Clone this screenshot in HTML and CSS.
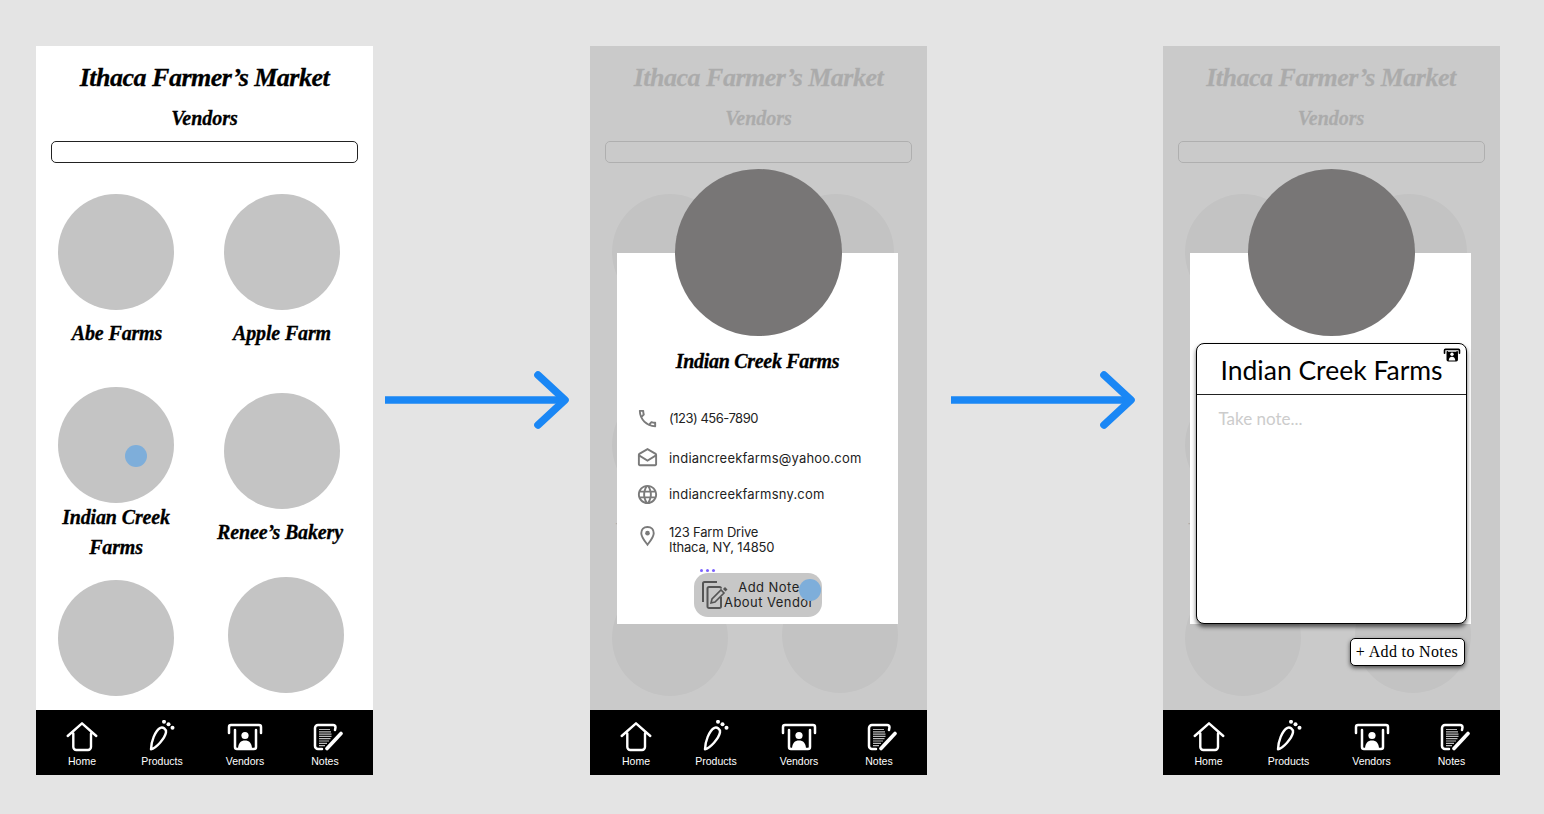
FILE: index.html
```html
<!DOCTYPE html>
<html lang="en">
<head>
    <meta charset="UTF-8">
    <meta name="viewport" content="width=device-width, initial-scale=1.0">
    <title>Ithaca Farmer's Market flow</title>
    <link rel="stylesheet" href="styles.css">
</head>
<body>

<!-- nav icons, used by all three phones -->
<svg class="defs" width="0" height="0">
    <symbol id="i-home" viewBox="-1 0 36 34">
        <path d="M2.7 16 17 3.3 31.3 16M8.3 13.5V27a3 3 0 0 0 3 3H23a3 3 0 0 0 3-3V13.5" fill="none" stroke="#fff" stroke-width="2.4" stroke-linecap="round" stroke-linejoin="round"/>
    </symbol>
    <symbol id="i-products" viewBox="-1 1.7 36 34">
        <path d="M6 31C6 24 10 12 15.5 9.5 18 8.5 21.5 11 21 14 20 20 11 30 6 31Z" fill="none" stroke="#fff" stroke-width="2.4" stroke-linejoin="round"/>
        <circle cx="19" cy="3.5" r="2" fill="#fff"/>
        <circle cx="23.5" cy="6" r="2" fill="#fff"/>
        <circle cx="27.5" cy="9.5" r="2" fill="#fff"/>
    </symbol>
    <symbol id="i-vendors" viewBox="0 -2 36 34">
        <path d="M2 11V5a2 2 0 0 1 2-2H32a2 2 0 0 1 2 2V11M8 8V25a2 2 0 0 0 2 2H27a2 2 0 0 0 2-2V8" fill="none" stroke="#fff" stroke-width="2.5" stroke-linecap="round"/>
        <circle cx="18" cy="13.5" r="3.6" fill="#fff"/>
        <path d="M11 27C11 21 14 18.5 18 18.5S25 21 25 27Z" fill="#fff"/>
    </symbol>
    <symbol id="i-notes" viewBox="-6 -3 36 34">
        <path d="M9 26H5a3 3 0 0 1-3-3V5a3 3 0 0 1 3-3H20a2.500 2.500 0 0 1 2.500 2.500L22 7" fill="none" stroke="#fff" stroke-width="2.5" stroke-linecap="round"/>
        <path d="M6 6.500H17M6 8.800H18M6 11.100H18.500M6 13.400H18.500M6 15.700H17.500M6 18H16M6 20.300H14M6 22.600H12" stroke="#bbb" stroke-width="1.200"/>
        <path d="M14 25.500 28 10.500" stroke="#fff" stroke-width="3.600" stroke-linecap="round"/>
    </symbol>
    <symbol id="i-vendors-dark" viewBox="0 0 36 30">
        <path d="M2 11V5a2 2 0 0 1 2-2H32a2 2 0 0 1 2 2V11M8 8V25a2 2 0 0 0 2 2H27a2 2 0 0 0 2-2V8" fill="none" stroke="#000" stroke-width="3.500" stroke-linecap="round"/>
        <rect x="8" y="8" width="21" height="19" fill="#000"/>
        <circle cx="18" cy="13.500" r="3.600" fill="#fff"/>
        <path d="M11 27C11 21 14 18.500 18 18.500S25 21 25 27Z" fill="#fff"/>
    </symbol>
</svg>

<main class="board">

    <!-- 1. vendor list -->
    <section class="phone">
        <div class="screen">
            <h1 class="title">Ithaca Farmer’s Market</h1>
            <h2 class="subtitle">Vendors</h2>
            <div class="search"></div>
            <div class="vendors">
                <div class="col">
                    <div class="vendor v-abe"><div class="thumb"></div><p class="vendor-name">Abe Farms</p></div>
                    <div class="vendor v-indian"><div class="thumb"><span class="tap tap-thumb"></span></div><p class="vendor-name">Indian Creek<br>Farms</p></div>
                    <div class="vendor v-low-left"><div class="thumb"></div></div>
                </div>
                <div class="col">
                    <div class="vendor"><div class="thumb"></div><p class="vendor-name">Apple Farm</p></div>
                    <div class="vendor v-renee"><div class="thumb"></div><p class="vendor-name">Renee’s Bakery</p></div>
                    <div class="vendor v-low-right"><div class="thumb"></div></div>
                </div>
            </div>
        </div>
        <nav class="tabbar">
            <a class="tab"><svg class="tab-icon"><use href="#i-home"/></svg>Home</a>
            <a class="tab"><svg class="tab-icon"><use href="#i-products"/></svg>Products</a>
            <a class="tab"><svg class="tab-icon"><use href="#i-vendors"/></svg>Vendors</a>
            <a class="tab"><svg class="tab-icon"><use href="#i-notes"/></svg>Notes</a>
        </nav>
    </section>

    <svg class="arrow arrow-first" viewBox="0 0 185 60"><path d="M0 30H178" fill="none" stroke="#1a87f5" stroke-width="7.600"/><path d="M153 5 180 30 153 55" fill="none" stroke="#1a87f5" stroke-width="7.600" stroke-linecap="round" stroke-linejoin="round"/></svg>

    <!-- 2. vendor card -->
    <section class="phone phone-second">
        <div class="screen">
            <h1 class="title">Ithaca Farmer’s Market</h1>
            <h2 class="subtitle">Vendors</h2>
            <div class="search"></div>
            <div class="vendors">
                <div class="col">
                    <div class="vendor v-abe"><div class="thumb"></div><p class="vendor-name">Abe Farms</p></div>
                    <div class="vendor v-indian"><div class="thumb"></div><p class="vendor-name">Indian Creek<br>Farms</p></div>
                    <div class="vendor v-low-left"><div class="thumb"></div></div>
                </div>
                <div class="col">
                    <div class="vendor"><div class="thumb"></div><p class="vendor-name">Apple Farm</p></div>
                    <div class="vendor v-renee"><div class="thumb"></div><p class="vendor-name">Renee’s Bakery</p></div>
                    <div class="vendor v-low-right"><div class="thumb"></div></div>
                </div>
            </div>
            <div class="dim"></div>
            <div class="card">
                <h3 class="card-name">Indian Creek Farms</h3>
                <div class="detail detail-phone">
                    <svg class="detail-icon" viewBox="0 0 24 24"><path d="M6.540 5c.060.890.210 1.760.450 2.590l-1.200 1.200c-.410-1.200-.670-2.470-.760-3.790h1.510m9.860 12.020c.850.240 1.720.390 2.600.450v1.490c-1.320-.090-2.590-.350-3.800-.750l1.200-1.190M7.500 3H4c-.550 0-1 .450-1 1 0 9.390 7.610 17 17 17 .550 0 1-.450 1-1v-3.490c0-.550-.450-1-1-1-1.240 0-2.450-.200-3.570-.570-.100-.040-.210-.050-.310-.050-.260 0-.510.100-.710.290l-2.200 2.200c-2.830-1.450-5.150-3.760-6.590-6.590l2.200-2.200c.280-.280.360-.670.250-1.020C8.700 6.450 8.500 5.250 8.500 4c0-.550-.450-1-1-1z"/></svg>
                    <span>(123) 456-7890</span>
                </div>
                <div class="detail detail-mail">
                    <svg class="detail-icon" viewBox="0 0 24 24"><path d="M21.990 8c0-.720-.370-1.350-.940-1.700L12 1 2.950 6.300C2.380 6.650 2 7.280 2 8v10c0 1.100.900 2 2 2h16c1.100 0 2-.900 2-2l-.010-10zM12 3.320 19.990 8v.010L12 13 4 8l8-4.680zM4 18v-7.660l8 5.020 7.990-4.990L20 18H4z"/></svg>
                    <span>indiancreekfarms@yahoo.com</span>
                </div>
                <div class="detail detail-web">
                    <svg class="detail-icon" viewBox="0 0 24 24"><path d="M11.990 2C6.470 2 2 6.480 2 12s4.470 10 9.990 10C17.520 22 22 17.520 22 12S17.520 2 11.990 2zm6.930 6h-2.950c-.320-1.250-.780-2.450-1.380-3.560 1.840.630 3.370 1.910 4.330 3.560zM12 4.040c.830 1.200 1.480 2.530 1.910 3.960h-3.820c.430-1.430 1.080-2.760 1.910-3.960zM4.260 14C4.100 13.360 4 12.690 4 12s.100-1.360.260-2h3.380c-.080.660-.140 1.320-.140 2s.060 1.340.140 2H4.260zm.820 2h2.950c.320 1.250.780 2.450 1.380 3.560-1.840-.630-3.370-1.900-4.330-3.560zm2.950-8H5.080c.960-1.660 2.490-2.930 4.330-3.560C8.810 5.550 8.350 6.750 8.030 8zM12 19.960c-.830-1.200-1.480-2.530-1.910-3.960h3.820c-.430 1.430-1.080 2.760-1.910 3.960zM14.340 14H9.660c-.090-.660-.160-1.320-.160-2s.070-1.350.160-2h4.680c.090.650.160 1.320.160 2s-.070 1.340-.160 2zm.250 5.560c.600-1.110 1.060-2.310 1.380-3.560h2.950c-.960 1.650-2.490 2.930-4.330 3.560zM16.360 14c.080-.660.140-1.320.140-2s-.060-1.340-.140-2h3.380c.160.640.260 1.310.260 2s-.100 1.360-.260 2h-3.380z"/></svg>
                    <span>indiancreekfarmsny.com</span>
                </div>
                <div class="detail detail-address">
                    <svg class="detail-icon" viewBox="0 0 24 24"><path d="M12 2C8 2 5.500 5 5.500 8.500c0 4 3.500 8 6.500 12 3-4 6.500-8 6.500-12C18.500 5 16 2 12 2z" fill="none" stroke="#7a7a7a" stroke-width="2"/><circle cx="12" cy="8.500" r="2.400"/></svg>
                    <span>123 Farm Drive<br>Ithaca, NY, 14850</span>
                </div>
                <button class="add-note">
                    <i class="busy"></i>
                    <svg class="add-note-icon" viewBox="0 0 30 30"><path d="M3 22V3.500A1.500 1.500 0 0 1 4.500 2H17" fill="none" stroke="#555" stroke-width="2"/><path d="M21 17V26.500A1.500 1.500 0 0 1 19.500 28H9A1.500 1.500 0 0 1 7.500 26.500V8.500A1.500 1.500 0 0 1 9 7H19.500A1.500 1.500 0 0 1 21 8.500" fill="none" stroke="#555" stroke-width="2"/><path d="M11 23 12 19 21 10 24 13 15 22Z" fill="none" stroke="#555" stroke-width="1.600"/><path d="M23 9 25 7 27.500 9.500 25.500 11.500Z" fill="#555"/></svg>
                    <span class="add-note-text">Add Note<br>About Vendor</span>
                    <span class="tap tap-button"></span>
                </button>
            </div>
            <div class="avatar"></div>
        </div>
        <nav class="tabbar">
            <a class="tab"><svg class="tab-icon"><use href="#i-home"/></svg>Home</a>
            <a class="tab"><svg class="tab-icon"><use href="#i-products"/></svg>Products</a>
            <a class="tab"><svg class="tab-icon"><use href="#i-vendors"/></svg>Vendors</a>
            <a class="tab"><svg class="tab-icon"><use href="#i-notes"/></svg>Notes</a>
        </nav>
    </section>

    <svg class="arrow arrow-second" viewBox="0 0 185 60"><path d="M0 30H178" fill="none" stroke="#1a87f5" stroke-width="7.600"/><path d="M153 5 180 30 153 55" fill="none" stroke="#1a87f5" stroke-width="7.600" stroke-linecap="round" stroke-linejoin="round"/></svg>

    <!-- 3. note entry -->
    <section class="phone">
        <div class="screen">
            <h1 class="title">Ithaca Farmer’s Market</h1>
            <h2 class="subtitle">Vendors</h2>
            <div class="search"></div>
            <div class="vendors">
                <div class="col">
                    <div class="vendor v-abe"><div class="thumb"></div><p class="vendor-name">Abe Farms</p></div>
                    <div class="vendor v-indian"><div class="thumb"></div><p class="vendor-name">Indian Creek<br>Farms</p></div>
                    <div class="vendor v-low-left"><div class="thumb"></div></div>
                </div>
                <div class="col">
                    <div class="vendor"><div class="thumb"></div><p class="vendor-name">Apple Farm</p></div>
                    <div class="vendor v-renee"><div class="thumb"></div><p class="vendor-name">Renee’s Bakery</p></div>
                    <div class="vendor v-low-right"><div class="thumb"></div></div>
                </div>
            </div>
            <div class="dim"></div>
            <div class="card"></div>
            <div class="avatar"></div>
            <div class="note">
                <div class="note-head">
                    Indian Creek Farms
                    <svg class="note-badge"><use href="#i-vendors-dark"/></svg>
                </div>
                <div class="note-body">Take note...</div>
            </div>
            <button class="add-to-notes">+ Add to Notes</button>
        </div>
        <nav class="tabbar">
            <a class="tab"><svg class="tab-icon"><use href="#i-home"/></svg>Home</a>
            <a class="tab"><svg class="tab-icon"><use href="#i-products"/></svg>Products</a>
            <a class="tab"><svg class="tab-icon"><use href="#i-vendors"/></svg>Vendors</a>
            <a class="tab"><svg class="tab-icon"><use href="#i-notes"/></svg>Notes</a>
        </nav>
    </section>

</main>

</body>
</html>
```

FILE: styles.css
```css
body {
    margin: 0;
    background-color: #e4e4e4;
    font-family: "Liberation Sans", Arial, sans-serif;
}
.defs {
    position: absolute;
}
.board {
    display: flex;
    align-items: flex-start;
    height: 814px;
    padding: 46px 0 0 36px;
    box-sizing: border-box;
    overflow: hidden;
}

/* phones */
.phone {
    flex: none;
    width: 337px;
    height: 729px;
    display: flex;
    flex-direction: column;
    background-color: white;
}
.phone-second {
    margin-left: 20px;
}
.screen {
    position: relative;
    flex: 1;
    min-height: 0;
    padding-top: 15px;
    overflow: hidden;
}
.title, .subtitle, .vendor-name, .card-name {
    margin: 0;
    text-align: center;
    font-family: "Liberation Serif", serif;
    font-style: italic;
    font-weight: bold;
    color: black;
    -webkit-text-stroke: 0.3px currentColor;
}
.title {
    font-size: 26px;
    line-height: 34px;
    letter-spacing: -0.5px;
}
.subtitle {
    margin-top: 8px;
    font-size: 20px;
    line-height: 30px;
}
.search {
    box-sizing: border-box;
    width: 307px;
    height: 22px;
    margin: 8px 0 0 15px;
    border: 1px solid #222;
    border-radius: 5px;
}

/* vendor grid */
.vendors {
    display: flex;
    margin: 31px 0 0 22px;
}
.col {
    flex: none;
    width: 166px;
    display: flex;
    flex-direction: column;
    align-items: flex-start;
}
.vendor {
    width: 116px;
    display: flex;
    flex-direction: column;
    align-items: center;
}
.thumb {
    position: relative;
    flex: none;
    width: 116px;
    height: 116px;
    border-radius: 50%;
    background-color: #c4c4c4;
}
.vendor-name {
    margin-top: 8px;
    font-size: 20px;
    line-height: 30px;
    letter-spacing: -0.15px;
    white-space: nowrap;
}
.v-abe .vendor-name {
    margin-left: 2px;
}
.v-indian {
    margin-top: 39px;
}
.v-indian .vendor-name {
    margin-top: -1px;
}
.v-renee {
    margin-top: 45px;
}
.v-renee .vendor-name {
    margin-right: 4px;
}
.v-low-left {
    margin-top: 18px;
}
.v-low-right {
    margin: 30px 0 0 4px;
}

.tap {
    position: absolute;
    width: 22px;
    height: 22px;
    border-radius: 50%;
    background-color: #7eaeda;
}
.tap-thumb {
    left: 67px;
    top: 58px;
}
.tap-button {
    right: 1px;
    top: 6px;
}

/* tab bar */
.tabbar {
    position: relative;
    flex: none;
    height: 65px;
    box-sizing: border-box;
    padding-left: 6px;
    display: grid;
    grid-template-columns: 80px 80px 86px 74px;
    background-color: black;
}
.tab {
    display: flex;
    flex-direction: column;
    align-items: center;
    padding-top: 10px;
    color: white;
    font-size: 10.5px;
    line-height: 13px;
}
.tab-icon {
    width: 36px;
    height: 34px;
    margin-bottom: 1px;
}

/* arrows */
.arrow {
    flex: none;
    width: 185px;
    height: 60px;
    margin-top: 323.5px;
}
.arrow-first {
    margin-left: 12px;
}
.arrow-second {
    margin-left: 24px;
    margin-right: 26.5px;
}

/* overlay */
.dim {
    position: absolute;
    inset: 0;
    background-color: rgba(195, 195, 195, 0.88);
}
.card {
    position: absolute;
    left: 27px;
    top: 207px;
    width: 281px;
    height: 371px;
    box-sizing: border-box;
    padding: 93px 0 0 19px;
    display: flex;
    flex-direction: column;
    background-color: white;
}
.avatar {
    position: absolute;
    left: 85px;
    top: 123px;
    width: 167px;
    height: 167px;
    border-radius: 50%;
    background-color: #787676;
}
.card-name {
    margin-left: -19px;
    font-size: 20px;
    line-height: 30px;
    letter-spacing: -0.3px;
}
.detail {
    display: grid;
    grid-template-columns: 33px 1fr;
    align-items: center;
    height: 20px;
    font-family: Inter, "Open Sans", sans-serif;
    font-size: 13px;
    line-height: 15px;
    color: #222;
}
.detail-icon {
    width: 23px;
    height: 23px;
    margin: -1.5px 0;
    fill: #7a7a7a;
}
.detail-phone {
    margin-top: 32px;
    letter-spacing: -0.5px;
}
.detail-mail {
    margin-top: 20px;
    letter-spacing: 0.2px;
}
.detail-web {
    margin-top: 16px;
    letter-spacing: 0.2px;
}
.detail-address {
    height: 30px;
    margin-top: 21px;
    align-items: start;
    letter-spacing: -0.2px;
}
.detail-address .detail-icon {
    margin: 0;
}
.add-note {
    position: relative;
    align-self: flex-start;
    width: 128px;
    height: 44px;
    margin: 18px 0 0 58px;
    padding: 0 0 0 7px;
    display: flex;
    align-items: center;
    border: none;
    border-radius: 14px;
    background-color: #c7c7c7;
    font-family: Inter, "Open Sans", sans-serif;
    font-size: 13px;
    line-height: 15px;
    letter-spacing: 0.45px;
    color: #222;
    text-align: center;
}
.add-note-icon {
    flex: none;
    width: 30px;
    height: 30px;
    margin-left: -1px;
}
.add-note-text {
    margin-left: -6px;
    white-space: nowrap;
}
.busy {
    position: absolute;
    left: 6px;
    top: -4px;
    width: 3px;
    height: 3px;
    border-radius: 50%;
    background-color: #7b61ff;
    box-shadow: 6px 0 #7b61ff, 12px 0 #7b61ff;
}

/* note entry */
.note {
    position: absolute;
    left: 33px;
    top: 297px;
    width: 271px;
    height: 281px;
    box-sizing: border-box;
    border: 1.5px solid black;
    border-radius: 8px;
    background-color: white;
    box-shadow: 0 3px 4px rgba(0, 0, 0, 0.6);
}
.note-head {
    position: relative;
    height: 51px;
    box-sizing: border-box;
    padding: 10px 0 0 24px;
    border-bottom: 1px solid #222;
    font-family: Lato, sans-serif;
    font-size: 26.5px;
    line-height: 32px;
    color: black;
}
.note-badge {
    position: absolute;
    right: 5px;
    top: 4px;
    width: 18px;
    height: 14px;
}
.note-body {
    padding: 14px 0 0 22px;
    font-family: Lato, sans-serif;
    font-size: 17px;
    line-height: 20px;
    color: #ccc;
}
.add-to-notes {
    position: absolute;
    left: 187px;
    top: 592px;
    width: 115px;
    height: 28px;
    padding: 0;
    border: 1px solid black;
    border-radius: 5px;
    background-color: white;
    box-shadow: 0 2px 4px rgba(0, 0, 0, 0.6);
    font-family: "Liberation Serif", serif;
    font-size: 16px;
    letter-spacing: 0.35px;
    color: black;
}
```
